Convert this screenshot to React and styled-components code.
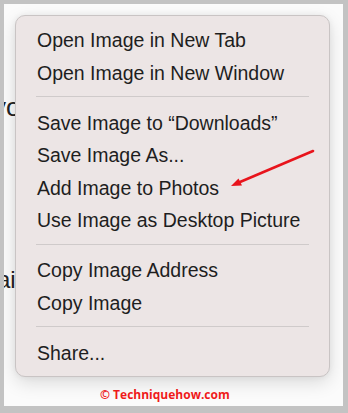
import React from 'react';
import styled, { createGlobalStyle } from 'styled-components';

const GlobalStyle = createGlobalStyle`
  html, body {
    margin: 0;
    padding: 0;
    background: #c3c3c3;
  }
  body {
    width: 348px;
    height: 413px;
    overflow: hidden;
    font-family: "Liberation Sans", Arial, sans-serif;
  }
`;

const Canvas = styled.div`
  display: grid;
  grid-template-columns: 11px 315px;
  grid-template-rows: auto auto;
  align-content: start;
  margin: 4px 5px 0 4px;
  padding-top: 11px;
  height: 402px;
  box-sizing: border-box;
  background: #fbfbfb;
  overflow: hidden;
`;

const Behind = styled.div`
  grid-row: 1 / span 2;
  display: flex;
  flex-direction: column;
  overflow: hidden;
`;

const BehindText = styled.span`
  display: block;
  margin-top: ${p => p.$top}px;
  margin-left: ${p => p.$left}px;
  font-size: ${p => p.$size}px;
  line-height: 24px;
  color: #222;
  white-space: nowrap;
`;

const Menu = styled.div`
  position: relative;
  display: flex;
  flex-direction: column;
  padding: 8px 0 7px;
  background: #ece5e5;
  border: 1px solid #c9c4c4;
  border-radius: 10px;
  box-shadow: 0 6px 18px rgba(0, 0, 0, 0.13), 0 0 6px rgba(0, 0, 0, 0.06);
`;

const Item = styled.div`
  height: 32.5px;
  line-height: 32.5px;
  padding-left: 21px;
  font-size: 19.5px;
  color: #1e1e1e;
  white-space: nowrap;
`;

const Separator = styled.div`
  height: 17.5px;
  box-sizing: border-box;
  padding-top: 7px;
  margin: 0 20px;
  &::after {
    content: '';
    display: block;
    height: 1px;
    background: #cfcaca;
  }
`;

const Arrow = styled.svg`
  position: absolute;
  left: 210px;
  top: 130px;
  width: 95px;
  height: 45px;
  overflow: visible;
`;

const Watermark = styled.div`
  grid-column: 2;
  margin: 10px 0 0 85px;
  font-family: "Open Sans", "Liberation Sans", sans-serif;
  font-weight: 700;
  font-size: 12px;
  line-height: 15px;
  color: #f21b1b;
`;

const groups = [
  ['Open Image in New Tab', 'Open Image in New Window'],
  ['Save Image to \u201CDownloads\u201D', 'Save Image As...', 'Add Image to Photos', 'Use Image as Desktop Picture'],
  ['Copy Image Address', 'Copy Image'],
  ['Share...'],
];

const App = () => {
  return (
    <>
      <GlobalStyle />
      <Canvas>
        <Behind>
          <BehindText $top={80} $left={-11} $size={26}>yo</BehindText>
          <BehindText $top={149} $left={-7} $size={24}>ai</BehindText>
        </Behind>
        <Menu>
          {groups.map((g, i) => (
            <React.Fragment key={i}>
              {i > 0 && <Separator />}
              {g.map(label => <Item key={label}>{label}</Item>)}
            </React.Fragment>
          ))}
          <Arrow viewBox='0 0 95 45'>
            <path d='M87 5 L14 36' stroke='#e8141c' strokeWidth='2.5' strokeLinecap='round' />
            <polygon points='5,40 16,39.5 12.5,32.5' fill='#e8141c' />
          </Arrow>
        </Menu>
        <Watermark>© Techniquehow.com</Watermark>
      </Canvas>
    </>
  );
};

export default App;
